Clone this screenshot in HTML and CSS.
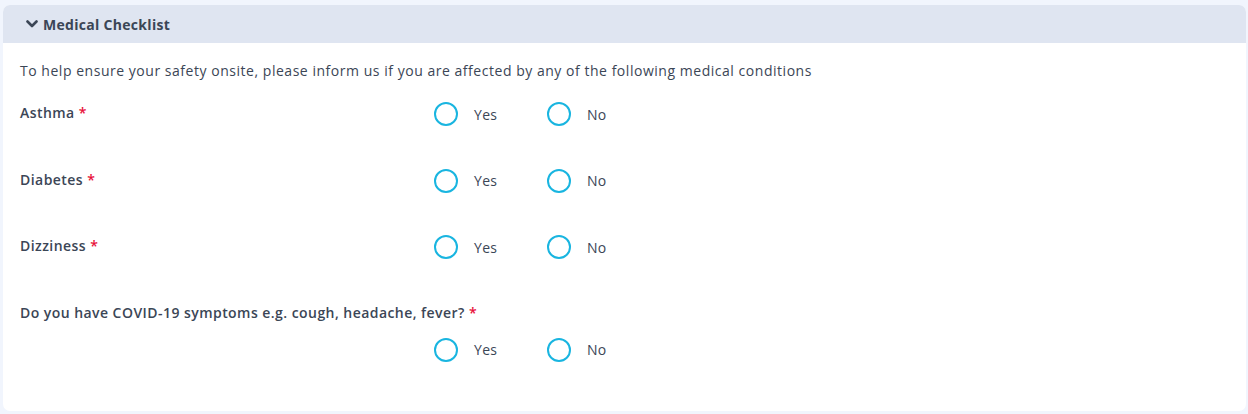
FILE: index.html
```html
<!DOCTYPE html>
<html>
<head>
<meta charset="utf-8">
<link rel="stylesheet" href="styles.css">
</head>
<body>
<div class="card">
  <div class="card-header">
    <svg class="chev" width="12" height="8" viewBox="0 0 12 8"><path d="M1.5 1.5 L6 6 L10.5 1.5" fill="none" stroke="#3b4656" stroke-width="2.6" stroke-linecap="round" stroke-linejoin="round"/></svg>
    <span class="title">Medical Checklist</span>
  </div>
  <div class="card-body">
    <p class="intro">To help ensure your safety onsite, please inform us if you are affected by any of the following medical conditions</p>
    <div class="row">
      <div class="label">Asthma <span class="req">*</span></div>
      <div class="options">
        <label class="opt"><span class="radio"></span><span class="opt-text">Yes</span></label>
        <label class="opt"><span class="radio"></span><span class="opt-text">No</span></label>
      </div>
    </div>
    <div class="row">
      <div class="label">Diabetes <span class="req">*</span></div>
      <div class="options">
        <label class="opt"><span class="radio"></span><span class="opt-text">Yes</span></label>
        <label class="opt"><span class="radio"></span><span class="opt-text">No</span></label>
      </div>
    </div>
    <div class="row">
      <div class="label">Dizziness <span class="req">*</span></div>
      <div class="options">
        <label class="opt"><span class="radio"></span><span class="opt-text">Yes</span></label>
        <label class="opt"><span class="radio"></span><span class="opt-text">No</span></label>
      </div>
    </div>
    <div class="row row-stack">
      <div class="label">Do you have COVID-19 symptoms e.g. cough, headache, fever? <span class="req">*</span></div>
      <div class="options">
        <label class="opt"><span class="radio"></span><span class="opt-text">Yes</span></label>
        <label class="opt"><span class="radio"></span><span class="opt-text">No</span></label>
      </div>
    </div>
  </div>
</div>
</body>
</html>
```
FILE: styles.css
```css
html, body {
  margin: 0;
  padding: 0;
  background: #f1f5fd;
  font-family: "Open Sans", "Liberation Sans", sans-serif;
  color: #3b4656;
}
body {
  padding: 5px 2px 0 3px;
}
.card {
  background: #fff;
  border-radius: 7px;
  overflow: hidden;
  height: 406px;
}
.card-header {
  background: #dfe5f1;
  height: 38px;
  display: flex;
  align-items: center;
  padding-left: 23px;
  gap: 5px;
}
.chev { display: block; }
.title {
  font-weight: 700;
  font-size: 14px;
  letter-spacing: 0.3px;
}
.card-body {
  padding: 18px 17px 0 17px;
}
.intro {
  margin: 0 0 14px 0;
  font-size: 14px;
  line-height: 19px;
  letter-spacing: 0.53px;
}
.row {
  display: flex;
  align-items: flex-start;
  height: 66.5px;
}
.label {
  width: 414px;
  flex-shrink: 0;
  font-size: 14px;
  font-weight: 600;
  line-height: 19px;
  padding-top: 9px;
  letter-spacing: 0.45px;
}
.req { color: #e8103a; }
.options {
  display: flex;
  padding-top: 8px;
}
.opt {
  display: flex;
  align-items: center;
  width: 113px;
}
.radio {
  width: 20px;
  height: 20px;
  border: 2px solid #19b5e0;
  border-radius: 50%;
  box-sizing: content-box;
}
.opt-text {
  margin-left: 16px;
  font-size: 14px;
  letter-spacing: 0.3px;
}
.row-stack {
  flex-direction: column;
}
.row-stack .label {
  width: auto;
}
.row-stack .options {
  margin-left: 414px;
  padding-top: 16px;
}
```
